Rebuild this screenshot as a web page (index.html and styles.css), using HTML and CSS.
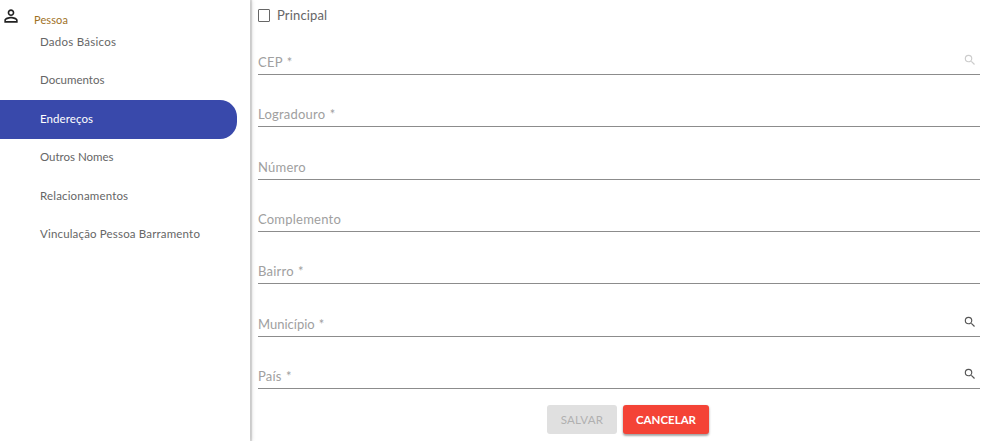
FILE: index.html
```html
<!DOCTYPE html>
<html lang="pt-BR">
<head>
<meta charset="utf-8">
<title>Pessoa - Endereços</title>
<link rel="stylesheet" href="styles.css">
</head>
<body>
<div class="layout">
  <nav class="sidebar">
    <div class="group">
      <svg class="person" viewBox="0 0 24 24"><path d="M12 5.900a2.100 2.100 0 1 1 0 4.200 2.100 2.100 0 0 1 0-4.200m0 9c2.970 0 6.100 1.460 6.100 2.100v1.100H5.900V17c0-.64 3.130-2.100 6.100-2.100M12 4C9.790 4 8 5.790 8 8s1.790 4 4 4 4-1.790 4-4-1.790-4-4-4zm0 9c-2.670 0-8 1.340-8 4v3h16v-3c0-2.660-5.330-4-8-4z"/></svg>
      <span class="group-name">Pessoa</span>
    </div>
    <a class="item basic">Dados Básicos</a>
    <a class="item tight">Documentos</a>
    <a class="item active">Endereços</a>
    <a class="item tight">Outros Nomes</a>
    <a class="item">Relacionamentos</a>
    <a class="item">Vinculação Pessoa Barramento</a>
  </nav>
  <main class="content">
    <label class="check"><span class="box"></span><span class="check-label">Principal</span></label>
    <div class="field"><span>CEP *</span><svg class="search disabled" viewBox="0 0 24 24"><path d="M15.500 14h-.79l-.28-.27A6.471 6.471 0 0 0 16 9.500 6.500 6.500 0 1 0 9.500 16c1.610 0 3.090-.59 4.230-1.570l.27.28v.79l5 4.990L20.490 19l-4.990-5zm-6 0a4.500 4.500 0 1 1 0-9 4.500 4.500 0 0 1 0 9z"/></svg></div>
    <div class="field"><span>Logradouro *</span></div>
    <div class="field"><span>Número</span></div>
    <div class="field"><span>Complemento</span></div>
    <div class="field"><span>Bairro *</span></div>
    <div class="field"><span class="city">Município *</span><svg class="search" viewBox="0 0 24 24"><path d="M15.500 14h-.79l-.28-.27A6.471 6.471 0 0 0 16 9.500 6.500 6.500 0 1 0 9.500 16c1.610 0 3.090-.59 4.230-1.570l.27.28v.79l5 4.990L20.490 19l-4.990-5zm-6 0a4.500 4.500 0 1 1 0-9 4.500 4.500 0 0 1 0 9z"/></svg></div>
    <div class="field"><span>País *</span><svg class="search" viewBox="0 0 24 24"><path d="M15.500 14h-.79l-.28-.27A6.471 6.471 0 0 0 16 9.500 6.500 6.500 0 1 0 9.500 16c1.610 0 3.090-.59 4.230-1.570l.27.28v.79l5 4.990L20.490 19l-4.990-5zm-6 0a4.500 4.500 0 1 1 0-9 4.500 4.500 0 0 1 0 9z"/></svg></div>
    <div class="actions">
      <button class="btn save" disabled>SALVAR</button>
      <button class="btn cancel">CANCELAR</button>
    </div>
  </main>
</div>
</body>
</html>
```
FILE: styles.css
```css
* { box-sizing: border-box; }
body { margin: 0; background: #fff; font-family: Lato, sans-serif; overflow: hidden; }
.layout { display: flex; height: 441px; }
.sidebar { width: 250px; flex: none; box-shadow: 2px 0 1px rgba(0,0,0,.12), 2px 0 4px rgba(0,0,0,.12); }
.group { display: flex; height: 23px; padding-left: 1px; }
.person { flex: none; width: 20px; height: 20px; margin-top: 6px; fill: #222; }
.group-name { margin: 12px 0 0 13px; font-size: 11px; line-height: 15px; letter-spacing: .1px; color: #a0711f; }
.item { display: flex; align-items: center; height: 38.400px; padding: 0 0 2px 40px; font-size: 11.500px; letter-spacing: .17px; color: #666; }
.item.basic { letter-spacing: .25px; }
.item.tight { letter-spacing: -.02px; }
.item.active { width: 237px; height: 39px; background: #3949ab; color: #fff; letter-spacing: .08px; border-radius: 0 17px 17px 0; }
.content { flex: 1; padding: 7.670px 11px 0 8px; }
.check { display: flex; align-items: center; height: 15px; gap: 7px; }
.box { width: 12px; height: 13px; border: 1px solid #666; border-radius: 1px; }
.check-label { font-size: 13px; line-height: 15px; letter-spacing: .15px; color: #666; }
.field { display: flex; justify-content: space-between; align-items: flex-end; height: 52.333px; padding-bottom: 3px; border-bottom: 1px solid #8c8c8c; font-size: 13px; line-height: 17px; letter-spacing: .22px; word-spacing: .8px; color: #a0a0a0; }
.city { letter-spacing: 0; }
.search { width: 14px; height: 14px; margin: 0 3px 4px 0; fill: #555; }
.search.disabled { fill: #ccc; }
.actions { display: flex; justify-content: center; gap: 6px; margin: 16.330px 0 0 18px; }
.btn { height: 29px; padding: 0; border: 0; border-radius: 3px; font: 11.500px/28px Lato, sans-serif; }
.save { width: 70px; background: #e0e0e0; color: #b0b0b0; letter-spacing: .3px; }
.cancel { width: 86px; background: #f44336; color: #fff; font-weight: 700; box-shadow: 0 2px 2px rgba(0,0,0,.25), 0 1px 3px rgba(0,0,0,.2); }
```
